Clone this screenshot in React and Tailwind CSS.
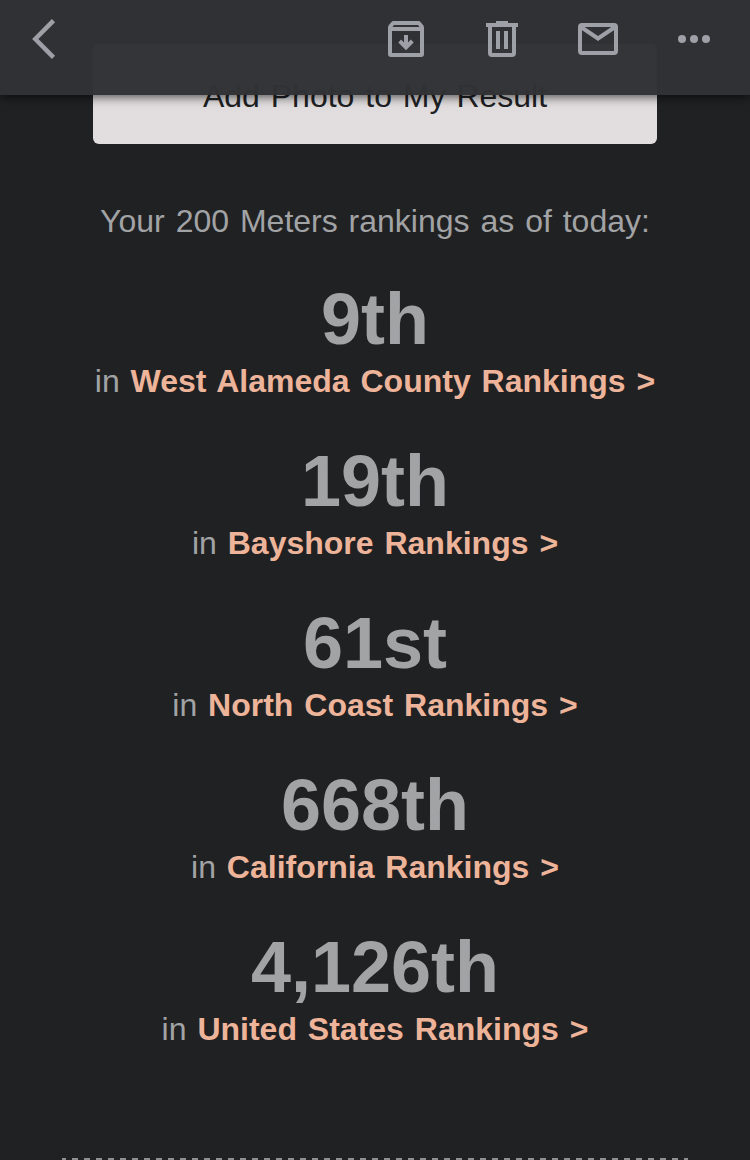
const RANKINGS = [
  { place: '9th', region: 'West Alameda County' },
  { place: '19th', region: 'Bayshore' },
  { place: '61st', region: 'North Coast' },
  { place: '668th', region: 'California' },
  { place: '4,126th', region: 'United States' },
]

export default function App() {
  return (
    <div className="relative flex h-[1160px] w-[750px] flex-col items-center overflow-hidden bg-[#202123] font-['Liberation_Sans',Arial,sans-serif] text-[#a2a3a5]">
      <Toolbar />

      {/* Scrolled content, starts underneath the toolbar */}
      <button className="mt-[44px] flex h-[100px] w-[564px] shrink-0 items-center justify-center rounded-md bg-[#e2dee0] pt-[3px] text-[32px] text-[#202123] [word-spacing:2px]">
        Add Photo to My Result
      </button>

      <p className="mt-[57px] text-[32px] leading-[40px] whitespace-nowrap [word-spacing:2px]">
        Your 200 Meters rankings as of today:
      </p>

      <div className="mt-[36px] flex flex-col gap-[36px]">
        {RANKINGS.map((r) => (
          <Ranking key={r.place} {...r} />
        ))}
      </div>

      {/* Dashed divider */}
      <div className="mt-auto h-[2px] w-[626px] shrink-0 bg-[repeating-linear-gradient(90deg,#8e8f90_0_4px,transparent_4px_10px,#8e8f90_10px_12px)]" />
    </div>
  )
}

function Ranking({ place, region }) {
  return (
    <div className="flex h-[126px] flex-col items-center whitespace-nowrap">
      <span className="text-[72px] leading-[84px] font-bold">{place}</span>
      <span className="-mt-px text-[32px] leading-[42px] [word-spacing:2px]">
        in <a className="font-bold text-[#edb49a]">{region} Rankings &gt;</a>
      </span>
    </div>
  )
}

function Toolbar() {
  return (
    <header className="absolute inset-x-0 top-0 z-10 flex h-[95px] items-start bg-[#313235]/[0.985] text-[#9da0a6] shadow-[0_2px_10px_rgba(0,0,0,0.65)]">
      <svg className="mt-[18px] ml-[28px] h-[42px] w-[30px]" viewBox="0 0 30 42" fill="none" stroke="currentColor" strokeWidth="4.500">
        <path d="M25.500 2.700 7.300 21l18.200 18.300" />
      </svg>
      <div className="mt-[15px] ml-auto flex gap-[48px] pr-[32px]">
        <ArchiveIcon />
        <TrashIcon />
        <MailIcon />
        <MoreIcon />
      </div>
    </header>
  )
}

function ArchiveIcon() {
  return (
    <svg className="size-12" viewBox="0 0 48 48">
      <path
        fill="currentColor"
        fillRule="evenodd"
        d="M12 6h24c1.200 0 2.200.5 2.900 1.400l2.200 2.700c.6.700.9 1.500.9 2.500V39a3 3 0 0 1-3 3H9a3 3 0 0 1-3-3V12.600c0-1 .3-1.800.9-2.500l2.200-2.700C9.800 6.500 10.800 6 12 6zM12 10l-1.500 2h27L36 10zM10 16v22h28V16z"
      />
      <path fill="none" stroke="currentColor" strokeWidth="4" d="M24 20v12M17.700 26l6.300 6.300 6.300-6.300" />
    </svg>
  )
}

function TrashIcon() {
  return (
    <svg className="size-12" viewBox="0 0 48 48" fill="none" stroke="currentColor" strokeWidth="4">
      <path d="M8 10h32" />
      <path d="M18 8h12" />
      <path d="M12 10v28a2 2 0 0 0 2 2h20a2 2 0 0 0 2-2V10" />
      <path d="M20 16v18M28 16v18" />
    </svg>
  )
}

function MailIcon() {
  return (
    <svg className="size-12" viewBox="0 0 48 48" fill="none" stroke="currentColor" strokeWidth="4">
      <rect x="6" y="10" width="36" height="28" rx="2" />
      <path d="m7 12 17 11.500L41 12" />
    </svg>
  )
}

function MoreIcon() {
  return (
    <svg className="size-12" viewBox="0 0 48 48" fill="currentColor">
      <circle cx="12" cy="24" r="4" />
      <circle cx="24" cy="24" r="4" />
      <circle cx="36" cy="24" r="4" />
    </svg>
  )
}
